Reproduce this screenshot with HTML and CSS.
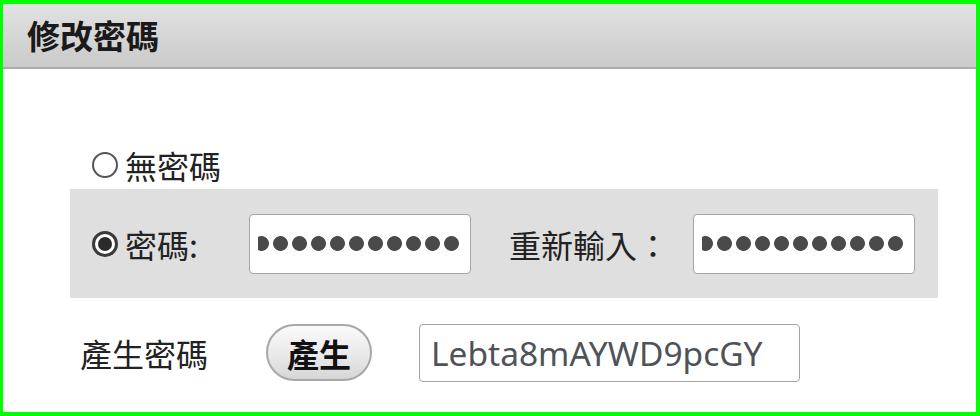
FILE: index.html
```html
<!DOCTYPE html>
<html lang="zh-Hant">
<head>
<meta charset="utf-8">
<title>修改密碼</title>
<link rel="stylesheet" href="styles.css">
</head>
<body>
<div class="frame">
  <div class="header"><h1 class="title">修改密碼</h1></div>
  <div class="content">
    <div class="row row-none">
      <span class="radio"></span>
      <span class="label">無密碼</span>
    </div>
    <div class="band">
      <span class="radio checked"></span>
      <span class="label pw-label">密碼:</span>
      <div class="field pw"></div>
      <span class="label re-label">重新輸入：</span>
      <div class="field pw"></div>
    </div>
    <div class="row row-gen">
      <span class="label gen-label">產生密碼</span>
      <button class="btn" type="button">產生</button>
      <div class="field gen">Lebta8mAYWD9pcGY</div>
    </div>
  </div>
</div>
</body>
</html>
```
FILE: styles.css
```css
html, body {
  margin: 0;
  padding: 0;
  background: #ffffff;
}

.frame {
  box-sizing: border-box;
  width: 980px;
  height: 416px;
  border-style: solid;
  border-color: #00ff00;
  border-width: 4px 4px 4px 3px;
  background: #ffffff;
  font-family: "Noto Sans CJK TC", "Noto Sans", sans-serif;
  color: #222222;
  overflow: hidden;
}

.header {
  box-sizing: border-box;
  height: 65px;
  background: linear-gradient(#e2e2e2, #cacaca);
  border-bottom: 2px solid #acacac;
  display: flex;
  align-items: center;
  padding-left: 24px;
}

.title {
  margin: 0;
  font-size: 33px;
  font-weight: bold;
  color: #1a1a1a;
  line-height: 1;
}

.content {
  padding: 76px 38px 0 67px;
}

.row {
  display: flex;
  align-items: center;
}

.row-none {
  height: 40px;
  padding-left: 22px;
  margin-bottom: 4px;
}

.label {
  font-size: 32px;
  line-height: 1;
  white-space: nowrap;
}

.radio {
  box-sizing: border-box;
  flex: none;
  width: 26px;
  height: 26px;
  border-radius: 50%;
  border: 2px solid #555555;
  background: #ffffff;
  margin-right: 7px;
  display: flex;
  align-items: center;
  justify-content: center;
}

.radio.checked {
  border: 3px solid #3a3a3a;
}

.radio.checked::after {
  content: "";
  width: 14px;
  height: 14px;
  border-radius: 50%;
  background: #2b2b2b;
}

.band {
  height: 109px;
  background: #dfdfdf;
  display: flex;
  align-items: center;
  padding-left: 22px;
}

.pw-label {
  width: 124px;
}

.re-label {
  width: 184px;
  margin-left: 38px;
}

.field {
  box-sizing: border-box;
  background: #ffffff;
  border: 1px solid #a5a5a5;
  border-radius: 4px;
  flex: none;
}

.pw {
  width: 222px;
  height: 60px;
  padding: 0 9px 0 8px;
  background: radial-gradient(circle closest-side, #4a4a4a 7px, rgba(74, 74, 74, 0) 7.8px) right center / 19px 19px repeat-x content-box content-box, #ffffff;
}

.row-gen {
  margin-top: 24px;
  height: 61px;
  padding-left: 10px;
}

.gen-label {
  width: 186px;
}

.btn {
  box-sizing: border-box;
  width: 106px;
  height: 57px;
  border-radius: 29px;
  border: 2px solid #a8a8a8;
  background: linear-gradient(#fafafa, #e9e9e9 55%, #d6d6d6);
  font-family: "Noto Sans CJK TC", sans-serif;
  font-size: 32px;
  font-weight: bold;
  color: #111111;
  padding: 0;
  line-height: 1;
}

.gen {
  width: 381px;
  height: 58px;
  margin-left: 47px;
  padding-left: 11px;
  display: flex;
  align-items: center;
  font-family: "Noto Sans", "Open Sans", sans-serif;
  font-size: 33.5px;
  color: #4f5358;
  white-space: nowrap;
}
```
